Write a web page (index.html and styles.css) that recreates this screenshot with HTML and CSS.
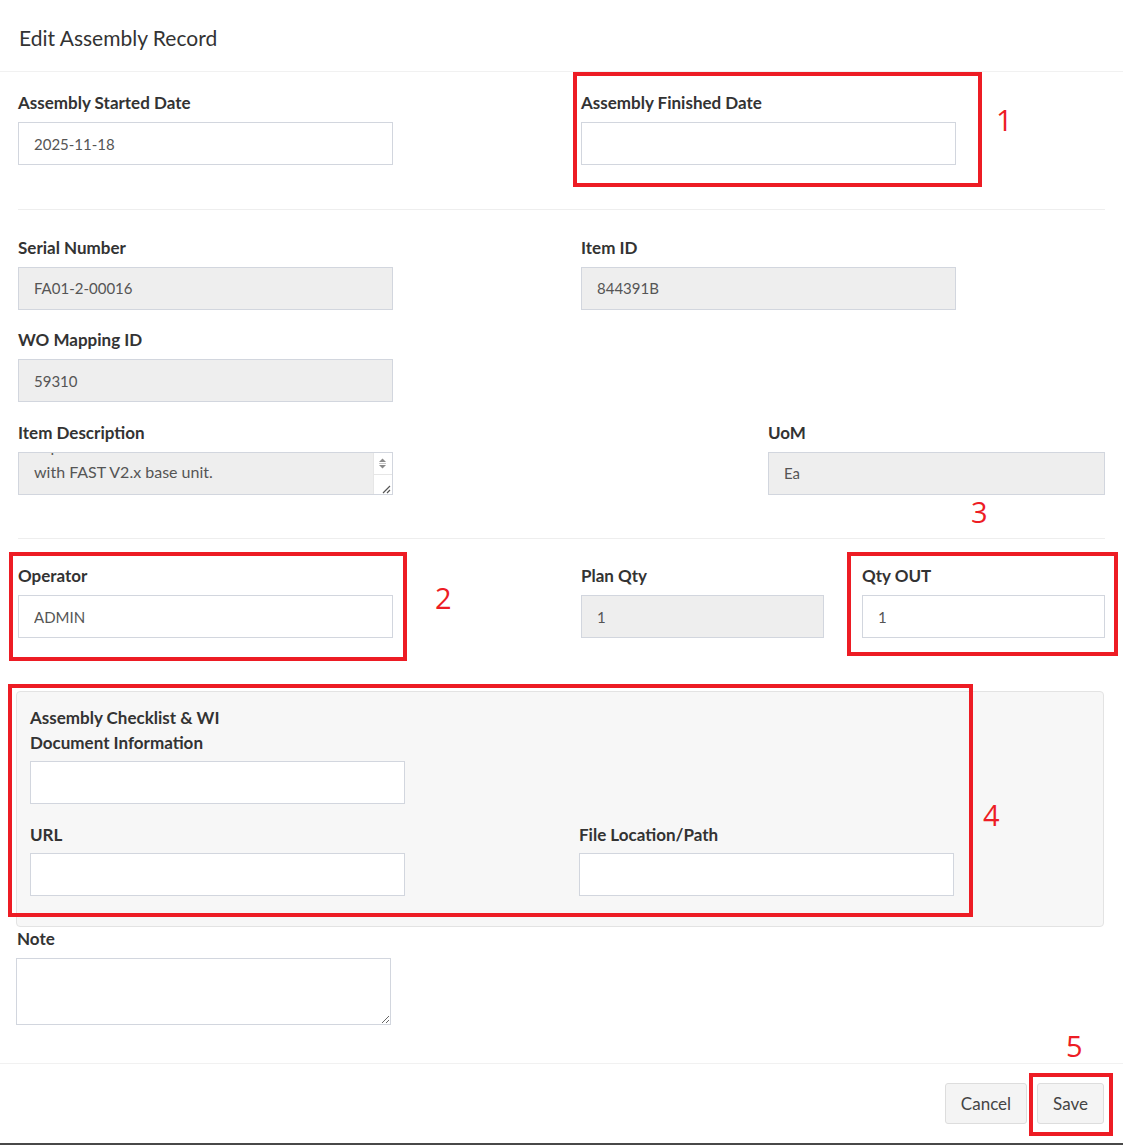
FILE: index.html
```html
<!DOCTYPE html>
<html lang="en">
<head>
    <meta charset="UTF-8">
    <meta name="viewport" content="width=device-width, initial-scale=1.0">
    <title>Edit Assembly Record</title>
    <link rel="stylesheet" href="styles.css">
</head>
<body>
    <div class="modal">
        <div class="modal-header">
            <h4 class="modal-title">Edit Assembly Record</h4>
        </div>

        <div class="modal-body">
            <div class="row cols-half">
                <div class="form-group">
                    <label>Assembly Started Date</label>
                    <input type="text" class="form-control w-md" value="2025-11-18">
                </div>
                <div class="form-group">
                    <label>Assembly Finished Date</label>
                    <input type="text" class="form-control w-md" value="">
                </div>
            </div>

            <hr class="divider">

            <div class="row cols-half">
                <div class="form-group">
                    <label>Serial Number</label>
                    <input type="text" class="form-control w-md" value="FA01-2-00016" readonly>
                </div>
                <div class="form-group">
                    <label>Item ID</label>
                    <input type="text" class="form-control w-md" value="844391B" readonly>
                </div>
                <div class="form-group">
                    <label>WO Mapping ID</label>
                    <input type="text" class="form-control w-md" value="59310" readonly>
                </div>
            </div>

            <div class="row cols-desc">
                <div class="form-group">
                    <label>Item Description</label>
                    <div class="form-control w-md desc-box">
                        <div class="desc-text">Top cover kit for use<br>with FAST V2.x base unit.</div>
                        <svg class="desc-scroll" width="19" height="41" viewBox="0 0 19 41">
                            <rect x="0" y="0" width="19" height="41" fill="#ffffff"/>
                            <line x1="0.5" y1="0" x2="0.5" y2="41" stroke="#e6e6e6"/>
                            <line x1="0" y1="21.5" x2="19" y2="21.5" stroke="#e6e6e6"/>
                            <path d="M6 9 L9.5 5.5 L13 9 Z" fill="#8a8a8a"/>
                            <line x1="6" y1="10.5" x2="13" y2="10.5" stroke="#c8c8c8"/>
                            <path d="M6 12 L9.5 15.5 L13 12 Z" fill="#8a8a8a"/>
                            <path d="M10 40 L17 33 M14 40 L17 37" stroke="#555" stroke-width="1.2"/>
                        </svg>
                    </div>
                </div>
                <div class="form-group">
                    <label>UoM</label>
                    <input type="text" class="form-control" value="Ea" readonly>
                </div>
            </div>

            <hr class="divider divider-b">

            <div class="row cols-qty">
                <div class="form-group">
                    <label>Operator</label>
                    <input type="text" class="form-control w-md" value="ADMIN">
                </div>
                <div class="form-group">
                    <label>Plan Qty</label>
                    <input type="text" class="form-control w-sm" value="1" readonly>
                </div>
                <div class="form-group">
                    <label>Qty OUT</label>
                    <input type="text" class="form-control" value="1">
                </div>
            </div>

            <div class="doc-panel">
                <div class="form-group span-all">
                    <label>Assembly Checklist &amp; WI<br>Document Information</label>
                    <input type="text" class="form-control w-md" value="">
                </div>
                <div class="form-group">
                    <label>URL</label>
                    <input type="text" class="form-control w-md" value="">
                </div>
                <div class="form-group">
                    <label>File Location/Path</label>
                    <input type="text" class="form-control w-md" value="">
                </div>
            </div>

            <div class="form-group note-group">
                <label>Note</label>
                <textarea class="form-control note-area"></textarea>
            </div>
        </div>

        <div class="modal-footer">
            <button type="button" class="btn">Cancel</button>
            <button type="button" class="btn">Save</button>
        </div>
    </div>
    <div class="modal-edge"></div>

    <!-- annotation marks -->
    <div class="mark box-1"></div>
    <div class="mark-num num-1">1</div>
    <div class="mark box-2"></div>
    <div class="mark-num num-2">2</div>
    <div class="mark box-3"></div>
    <div class="mark-num num-3">3</div>
    <div class="mark box-4"></div>
    <div class="mark-num num-4">4</div>
    <div class="mark box-5"></div>
    <div class="mark-num num-5">5</div>
</body>
</html>
```

FILE: styles.css
```css
body {
    font-family: "Lato", "Liberation Sans", sans-serif;
    margin: 0;
    background-color: #ffffff;
    color: #333;
    position: relative;
    min-height: 1147px;
}

.modal {
    background: white;
}

.modal-header {
    height: 72px;
    box-sizing: border-box;
    padding: 26px 19px 0;
    border-bottom: 1px solid #f1f1f1;
}

.modal-title {
    margin: 0;
    font-size: 21px;
    font-weight: normal;
    line-height: 24px;
    color: #333;
}

.modal-body {
    padding: 19px 18px 38px 16px;
}

.row {
    display: grid;
    padding-left: 2px;
}

.cols-half {
    grid-template-columns: 563px 1fr;
}

.cols-desc {
    grid-template-columns: 750px 1fr;
}

.cols-qty {
    grid-template-columns: 563px 281px 1fr;
}

.form-group {
    margin-bottom: 18.5px;
}

label {
    display: block;
    font-size: 17px;
    font-weight: bold;
    line-height: 24px;
    margin-bottom: 7px;
    color: #333;
}

.form-control {
    display: block;
    width: 100%;
    height: 43px;
    box-sizing: border-box;
    padding: 6px 15px;
    font-family: inherit;
    font-size: 15px;
    color: #555;
    background: white;
    border: 1px solid #d2d6de;
    border-radius: 0;
    outline: none;
}

.form-control[readonly] {
    background-color: #eeeeee;
}

.w-md {
    width: 375px;
}

.w-sm {
    width: 243px;
}

.divider {
    border: 0;
    border-top: 1px solid #eeeeee;
    margin: 25px 0 26px 2px;
}

.divider-b {
    margin-bottom: 25px;
}

/* item description: scrolled textarea look */
.desc-box {
    position: relative;
    overflow: hidden;
    background-color: #eeeeee;
    padding: 0 15px;
    font-size: 16px;
}

.desc-text {
    position: absolute;
    left: 15px;
    bottom: 9px;
    line-height: 26px;
    white-space: nowrap;
}

.desc-scroll {
    position: absolute;
    top: 0;
    right: 0;
}

.doc-panel {
    display: grid;
    grid-template-columns: 549px 1fr;
    margin: 34px 1px 0 0;
    padding: 13px 13px 0;
    background-color: #f7f7f7;
    border: 1px solid #e3e3e3;
    border-radius: 4px;
}

.doc-panel label {
    line-height: 25px;
    margin-bottom: 6px;
}

.doc-panel .form-group {
    margin-bottom: 18px;
}

.doc-panel .form-group:nth-child(n+2) {
    margin-bottom: 30px;
}

.span-all {
    grid-column: 1 / -1;
}

.note-group {
    margin: 0;
}

.note-group label {
    margin-left: 1px;
}

.note-area {
    width: 375px;
    height: 67px;
    resize: vertical;
}

.modal-footer {
    display: flex;
    justify-content: flex-end;
    gap: 10px;
    padding: 19px 19px 19px;
    border-top: 1px solid #f1f1f1;
}

.btn {
    height: 41px;
    padding: 0 15px;
    font-family: inherit;
    font-size: 17px;
    color: #444;
    background-color: #f4f4f4;
    border: 1px solid #dddddd;
    border-radius: 3px;
    cursor: pointer;
}

.modal-edge {
    height: 2px;
    background-color: #484848;
}

/* red review marks drawn over the form */
.mark {
    position: absolute;
    border: 4px solid #ed1c24;
    box-sizing: border-box;
}

.box-1 { left: 573px; top: 72px; width: 409px; height: 115px; }
.box-2 { left: 9px; top: 552px; width: 398px; height: 109px; }
.box-3 { left: 847px; top: 552px; width: 271px; height: 104px; }
.box-4 { left: 8px; top: 684px; width: 965px; height: 233px; }
.box-5 { left: 1029px; top: 1073px; width: 84px; height: 63px; }

.mark-num {
    position: absolute;
    font-family: "Open Sans", sans-serif;
    font-size: 29px;
    line-height: 30px;
    color: #ed1c24;
}

.num-1 { left: 996px; top: 105px; }
.num-2 { left: 435px; top: 583px; }
.num-3 { left: 971px; top: 497px; }
.num-4 { left: 983px; top: 800px; }
.num-5 { left: 1066px; top: 1031px; }
```
